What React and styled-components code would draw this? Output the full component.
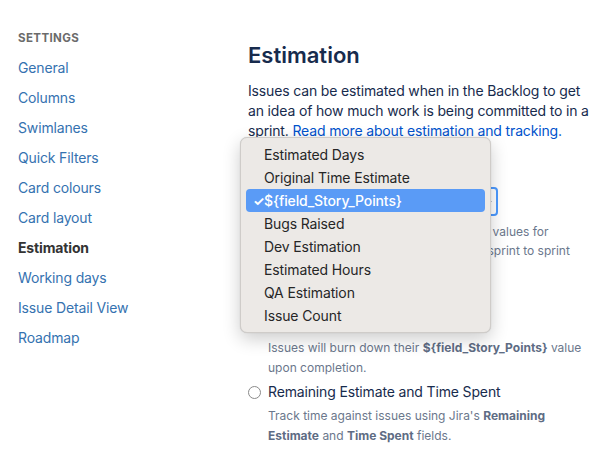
import React from "react";
import styled, { createGlobalStyle } from "styled-components";

const Global = createGlobalStyle`
  html, body { margin: 0; padding: 0; background: #fff; }
  body { font-family: Inter, "Noto Sans", "Liberation Sans", sans-serif; -webkit-font-smoothing: antialiased; }
  * { box-sizing: border-box; }
`;

const Page = styled.div`
  display: flex;
  width: 602px;
  height: 460px;
  overflow: hidden;
  position: relative;
`;

const Sidebar = styled.nav`
  width: 248px;
  flex: none;
  padding: 31px 0 0 18px;
  display: flex;
  flex-direction: column;
`;

const SideTitle = styled.div`
  font-size: 11.5px;
  font-weight: 700;
  letter-spacing: 0.4px;
  color: #6b6b6b;
  line-height: 14px;
  margin-bottom: 8px;
`;

const NavItem = styled.a`
  font-size: 14px;
  letter-spacing: -0.15px;
  line-height: 30px;
  color: ${(p) => (p.$active ? "#333333" : "#3572b0")};
  font-weight: ${(p) => (p.$active ? 700 : 400)};
  text-decoration: none;
`;

const Main = styled.main`
  flex: 1;
  padding-top: 41px;
  padding-right: 12px;
  color: #172b4d;
`;

const Title = styled.h1`
  margin: 0;
  font-size: 22px;
  line-height: 28px;
  font-weight: 600;
  color: #172b4d;
`;

const Intro = styled.p`
  margin: 12px 0 0;
  font-size: 14px;
  letter-spacing: -0.15px;
  line-height: 20px;
  color: #172b4d;
`;

const Link = styled.a`
  color: #0052cc;
  text-decoration: none;
`;

const Field = styled.div`
  margin-top: 22px;
  padding-left: 20px;
  display: flex;
  flex-direction: column;
`;

const Label = styled.div`
  font-size: 12px;
  font-weight: 600;
  line-height: 16px;
  color: #6b778c;
  margin-bottom: 8px;
`;

const SelectBox = styled.div`
  width: 230px;
  height: 29px;
  border: 2px solid #4c9aff;
  border-radius: 4px;
  display: flex;
  align-items: center;
  justify-content: space-between;
  padding: 0 3px 0 8px;
  font-size: 14px;
  color: #172b4d;
  background: #fff;
`;

const Help = styled.div`
  margin-top: ${(p) => p.$mt || 0}px;
  font-size: 12px;
  line-height: 19px;
  color: #6b778c;
  white-space: nowrap;
`;

const SubHeading = styled.div`
  margin-top: 28px;
  font-size: 14px;
  font-weight: 600;
  line-height: 20px;
  color: #172b4d;
`;

const RadioRow = styled.label`
  display: flex;
  align-items: center;
  gap: 7px;
  font-size: 14px;
  letter-spacing: -0.15px;
  line-height: 20px;
  color: #172b4d;
  margin-top: ${(p) => p.$mt || 0}px;
`;

const Radio = styled.span`
  width: 13px;
  height: 13px;
  border-radius: 50%;
  border: 1px solid #8a8a8a;
  background: #fff;
  flex: none;
`;

const RadioDesc = styled.div`
  padding-left: 20px;
  margin-top: 4px;
  font-size: 12px;
  line-height: 20px;
  color: #6b778c;
  b { font-weight: 700; color: #5e6c84; }
`;

const Menu = styled.div`
  position: absolute;
  left: 240px;
  top: 137px;
  width: 251px;
  padding: 5px;
  background: #ece9e6;
  border: 1px solid #cfccc9;
  border-radius: 7px;
  box-shadow: 0 6px 18px rgba(0, 0, 0, 0.2), 0 0 1px rgba(0, 0, 0, 0.2);
  display: flex;
  flex-direction: column;
`;

const MenuItem = styled.div`
  height: 23px;
  display: flex;
  align-items: center;
  position: relative;
  padding-left: 18px;
  border-radius: 4px;
  font-size: 14px;
  letter-spacing: -0.12px;
  color: ${(p) => (p.$selected ? "#fff" : "#262626")};
  font-weight: ${(p) => (p.$selected ? 500 : 400)};
  background: ${(p) => (p.$selected ? "#5a9bf6" : "transparent")};
`;

const Check = styled.span`
  position: absolute;
  left: 7px;
  font-size: 13px;
  font-weight: 700;
`;

const navItems = [
  "General",
  "Columns",
  "Swimlanes",
  "Quick Filters",
  "Card colours",
  "Card layout",
  "Estimation",
  "Working days",
  "Issue Detail View",
  "Roadmap",
];

const options = [
  "Estimated Days",
  "Original Time Estimate",
  "${field_Story_Points}",
  "Bugs Raised",
  "Dev Estimation",
  "Estimated Hours",
  "QA Estimation",
  "Issue Count",
];

export default function App() {
  return (
    <>
      <Global />
      <Page>
        <Sidebar>
          <SideTitle>SETTINGS</SideTitle>
          {navItems.map((n) => (
            <NavItem key={n} $active={n === "Estimation"}>
              {n}
            </NavItem>
          ))}
        </Sidebar>
        <Main>
          <Title>Estimation</Title>
          <Intro>
            Issues can be estimated when in the Backlog to get an idea of how much work is being
            committed to in a sprint. <Link>Read more about estimation and tracking.</Link>
          </Intro>
          <Field>
            <Label>Estimation Statistic</Label>
            <SelectBox>
              <span>{"${field_Story_Points}"}</span>
              <svg width="10" height="10" viewBox="0 0 10 10">
                <path d="M2 4l3 3 3-3" fill="none" stroke="#172b4d" strokeWidth="1.6" />
              </svg>
            </SelectBox>
            <Help $mt={6}>
              This statistic is used to calculate all the values for
              <br />
              Velocity and burndown may vary from sprint to sprint
            </Help>
          </Field>
          <SubHeading>Time Tracking</SubHeading>
          <RadioRow $mt={6}>
            <Radio />
            None
          </RadioRow>
          <RadioDesc>
            Issues will burn down their <b>{"${field_Story_Points}"}</b> value
            <br />
            upon completion.
          </RadioDesc>
          <RadioRow $mt={4}>
            <Radio />
            Remaining Estimate and Time Spent
          </RadioRow>
          <RadioDesc>
            Track time against issues using Jira's <b>Remaining</b>
            <br />
            <b>Estimate</b> and <b>Time Spent</b> fields.
          </RadioDesc>
        </Main>
        <Menu>
          {options.map((o) => (
            <MenuItem key={o} $selected={o === "${field_Story_Points}"}>
              {o === "${field_Story_Points}" && <Check>✓</Check>}
              {o}
            </MenuItem>
          ))}
        </Menu>
      </Page>
    </>
  );
}
